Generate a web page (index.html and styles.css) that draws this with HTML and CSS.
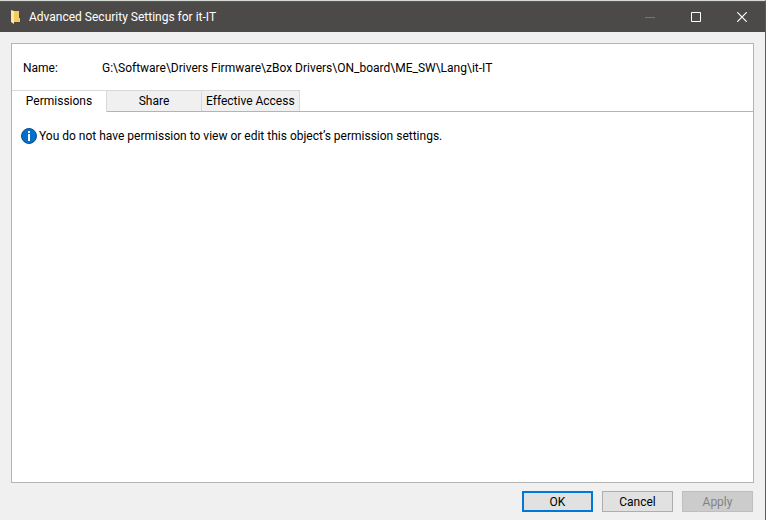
FILE: index.html
```html
<!DOCTYPE html>
<html lang="en">
<head>
  <meta charset="UTF-8">
  <title>Advanced Security Settings for it-IT</title>
  <link rel="stylesheet" href="styles.css">
</head>
<body>
  <div class="window">
    <header class="titlebar">
      <svg class="folder" width="10" height="14" viewBox="0 0 10 14">
        <path d="M1 1h7v7h1v4H1z" fill="#f2cb62"/>
        <path d="M0 0l3 1v13l-3-2z" fill="#ffe9a2"/>
      </svg>
      <h1>Advanced Security Settings for it-IT</h1>
      <div class="controls">
        <button type="button" aria-label="Minimize" disabled>
          <svg width="10" height="10" viewBox="0 0 10 10"><path d="M0 5.5h10" stroke="#757472"/></svg>
        </button>
        <button type="button" aria-label="Maximize">
          <svg width="10" height="10" viewBox="0 0 10 10"><path d="M.5 .5h9v9h-9z" fill="none" stroke="#fff"/></svg>
        </button>
        <button type="button" aria-label="Close">
          <svg width="10" height="10" viewBox="0 0 10 10"><path d="M.3 .3l9.4 9.4M9.7 .3L.3 9.7" stroke="#fff" stroke-width="1.2"/></svg>
        </button>
      </div>
    </header>

    <main class="content">
      <section class="panel">
        <dl class="object-name">
          <dt>Name:</dt>
          <dd>G:\Software\Drivers Firmware\zBox Drivers\ON_board\ME_SW\Lang\it-IT</dd>
        </dl>

        <div class="tabs" role="tablist">
          <button type="button" role="tab" class="tab active" aria-selected="true">Permissions</button>
          <button type="button" role="tab" class="tab" aria-selected="false">Share</button>
          <button type="button" role="tab" class="tab" aria-selected="false">Effective Access</button>
        </div>

        <p class="message">
          <svg width="16" height="16" viewBox="0 0 16 16">
            <circle cx="8" cy="8" r="7.5" fill="#0070cc" stroke="#0a4f8f"/>
            <path d="M7 3h2v2H7zM7 6h2v7H7z" fill="#fff"/>
          </svg>
          <span>You do not have permission to view or edit this object’s permission settings.</span>
        </p>
      </section>

      <div class="actions">
        <button type="button" class="btn default">OK</button>
        <button type="button" class="btn">Cancel</button>
        <button type="button" class="btn" disabled>Apply</button>
      </div>
    </main>
  </div>
</body>
</html>
```

FILE: styles.css
```css
* {
  box-sizing: border-box;
}

body {
  margin: 0;
  font-family: Roboto, "Open Sans", sans-serif;
  font-size: 12px;
  line-height: 16px;
  color: #000;
}

button {
  font: inherit;
  color: inherit;
}

.window {
  display: flex;
  flex-direction: column;
  min-height: 100vh;
  background-color: #f0f0f0;
  border-top: 1px solid #d5d9d3;
  border-right: 1px solid #5b5b5b;
}

.titlebar {
  display: flex;
  align-items: center;
  height: 31px;
  padding-left: 11px;
  background-color: #4c4a48;
  border-top: 1px solid #5a5b56;
  color: #fff;
}

.titlebar h1 {
  flex: 1;
  margin: 0 0 0 8px;
  font-size: 12px;
  font-weight: normal;
}

.controls {
  display: flex;
  height: 100%;
}

.controls button {
  display: flex;
  align-items: center;
  justify-content: center;
  width: 46px;
  padding: 0;
  border: none;
  background: none;
}

.content {
  flex: 1;
  display: flex;
  flex-direction: column;
  padding: 11px 11px 8px;
}

.panel {
  flex: 1;
  background-color: #fff;
  border: 1px solid #b4b4b4;
}

.object-name {
  display: flex;
  margin: 0;
  padding: 16px 11px 14px;
}

.object-name dt {
  width: 79px;
}

.object-name dd {
  margin: 0;
}

.tabs {
  display: flex;
  height: 22px;
  border-bottom: 1px solid #b4b4b4;
}

.tab {
  min-width: 95px;
  padding: 0 4px;
  border: 1px solid #d9d9d9;
  border-left: none;
  border-bottom: none;
  background-color: #f0f0f0;
}

/* covers the line under the tabs */
.tab.active {
  height: 22px;
  padding-bottom: 1px;
  background-color: #fff;
}

.message {
  display: flex;
  align-items: center;
  gap: 2px;
  margin: 16px 9px;
}

.actions {
  display: flex;
  justify-content: flex-end;
  gap: 9px;
  margin-top: 8px;
  padding-right: 1px;
}

.btn {
  width: 71px;
  height: 21px;
  padding: 0;
  border: 1px solid #adadad;
  background-color: #e1e1e1;
}

.btn.default {
  border: 2px solid #0078d7;
}

.btn:disabled {
  border-color: #bfbfbf;
  background-color: #ccc;
  color: #838383;
}
```
